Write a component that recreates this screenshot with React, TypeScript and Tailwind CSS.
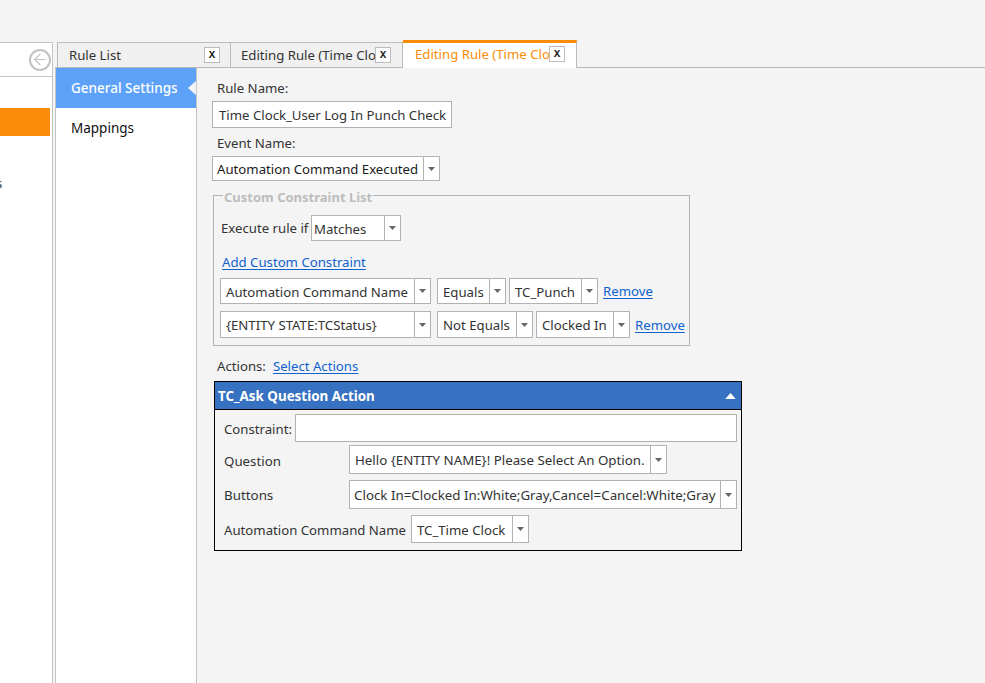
import { ArrowLeft } from 'lucide-react'

const fontClass = "font-['Noto_Sans','Open_Sans',sans-serif]"

function Caret({ up, light }: { up?: boolean; light?: boolean }) {
  return (
    <svg width={up ? 11 : 7} height={up ? 6 : 4} viewBox="0 0 7 4" className="shrink-0">
      <path d={up ? 'M3.5 0L7 4H0z' : 'M0 0h7L3.5 4z'} fill={light ? '#ffffff' : '#666666'} />
    </svg>
  )
}

function Select({ text, width, height, arrow = 16, dark, pad = 'pl-[4px]', className = '' }: { text: string; width: string; height: string; arrow?: number; dark?: boolean; pad?: string; className?: string }) {
  return (
    <div className={`flex shrink-0 bg-white border border-[#b2b2b2] ${width} ${height} ${className}`}>
      <div className={`flex-1 min-w-0 flex items-center pt-[1px] overflow-hidden whitespace-nowrap ${pad} ${dark ? 'text-[#1a1a1a]' : 'text-[#333333]'}`}>{text}</div>
      <div className="flex items-center justify-center border-l border-[#b2b2b2] shrink-0" style={{ width: arrow }}>
        <Caret />
      </div>
    </div>
  )
}

function CloseBox() {
  return (
    <span className="flex items-center justify-center w-[16px] h-[16px] shrink-0 bg-white border border-[#bcbcbc] text-[11px] leading-none font-bold text-[#222222] font-['Liberation_Mono',monospace]">
      X
    </span>
  )
}

function Link({ children, className = '' }: { children: string; className?: string }) {
  return <a className={`text-[#0f62d0] underline underline-offset-2 whitespace-nowrap ${className}`}>{children}</a>
}

export default function App() {
  return (
    <div className={`w-[985px] h-[683px] flex overflow-hidden bg-[#f4f4f4] text-[13.2px] leading-[18px] text-[#333333] ${fontClass}`}>
      {/* Left panel, cut off by the window */}
      <aside className="w-[53px] mt-[42px] shrink-0 bg-white border-t border-r border-[#c4c4c4] overflow-hidden">
        <div className="h-[34px] border-b border-[#c4c4c4] flex items-center justify-end pr-[1px]">
          <span className="flex items-center justify-center w-[22px] h-[22px] rounded-full border-2 border-[#c2c2c2]">
            <ArrowLeft className="w-[19px] h-[19px] text-[#c2c2c2]" strokeWidth={1.5} />
          </span>
        </div>
        <div className="mt-[31px] w-[50px] h-[28px] bg-[#fb8c0a]" />
        <div className="mt-[38px] -ml-[4px] text-[#333333]">s</div>
      </aside>

      <div className="flex-1 min-w-0 ml-[2px] flex flex-col">
        {/* Tab strip */}
        <div className="h-[28px] mt-[40px] flex items-end pl-[2px] border-b border-[#b8b8b8] shrink-0">
          <div className="w-[173px] h-[25px] flex items-center justify-between pl-[11px] pr-[10px] bg-[#f0f0f0] border-t border-l border-[#bcbcbc]">
            <span>Rule List</span>
            <CloseBox />
          </div>
          <div className="w-[173px] h-[25px] flex items-center pl-[10px] pr-[11px] bg-[#f0f0f0] border-t border-x border-[#bcbcbc]">
            <span className="flex-1 min-w-0 overflow-hidden whitespace-nowrap">Editing Rule (Time Clock</span>
            <CloseBox />
          </div>
          <div className="w-[174px] h-[28px] -mb-[1px] flex items-center pl-[12px] pr-[11px] pb-[3px] bg-white border-t-[3px] border-t-[#fb8c0a] border-r border-[#bcbcbc] text-[#fb8c0a]">
            <span className="flex-1 min-w-0 overflow-hidden whitespace-nowrap">Editing Rule (Time Clock</span>
            <CloseBox />
          </div>
        </div>

        <div className="flex-1 min-h-0 flex">
          {/* Settings nav */}
          <nav className="w-[142px] shrink-0 bg-white border-x border-[#c4c4c4] text-[13.5px]">
            <div className="relative h-[40px] flex items-center pl-[15px] bg-[#5da2f8] text-white font-medium">
              General Settings
              <span className="absolute right-0 top-[13px] w-0 h-0 border-y-[7px] border-y-transparent border-r-[8px] border-r-[#f4f4f4]" />
            </div>
            <div className="h-[40px] flex items-center pl-[15px] text-[#111111]">Mappings</div>
          </nav>

          {/* Rule form */}
          <main className="flex-1 min-w-0 pl-[15px]">
            <div className="pl-[5px] mt-[11px] h-[18px]">Rule Name:</div>
            <div className="mt-[4px] w-[240px] h-[27px] bg-white border border-[#b2b2b2] pl-[6px] pt-[1px] flex items-center whitespace-nowrap">
              Time Clock_User Log In Punch Check
            </div>
            <div className="pl-[5px] mt-[6px] h-[18px]">Event Name:</div>
            <Select text="Automation Command Executed" width="w-[228px]" height="h-[25px]" dark className="mt-[4px]" />

            <fieldset className="mt-[6px] ml-[1px] w-[477px] h-[159px] border border-[#b2b2b2] pl-[7px] pr-[3px]">
              <legend className="relative top-[2px] ml-[2px] px-[1px] text-[13px] text-[#bdbdbd] font-bold leading-[16px]">Custom Constraint List</legend>
              <div className="flex items-center mt-[12px]">
                <span className="w-[90px] shrink-0 whitespace-nowrap">Execute rule if</span>
                <Select text="Matches" width="w-[90px]" height="h-[26px]" pad="pl-[2px]" />
              </div>
              <Link className="block mt-[12px] ml-[1px] w-fit">Add Custom Constraint</Link>
              <div className="flex items-center mt-[7px] -ml-[1px]">
                <Select text="Automation Command Name" width="w-[211px]" height="h-[26px]" pad="pl-[5px]" />
                <Select text="Equals" width="w-[69px]" height="h-[26px]" pad="pl-[5px]" className="ml-[6px]" />
                <Select text="TC_Punch" width="w-[89px]" height="h-[26px]" pad="pl-[5px]" className="ml-[3px]" />
                <Link className="ml-[5px]">Remove</Link>
              </div>
              <div className="flex items-center mt-[7px] -ml-[1px]">
                <Select text="{ENTITY STATE:TCStatus}" width="w-[211px]" height="h-[27px]" pad="pl-[5px]" />
                <Select text="Not Equals" width="w-[96px]" height="h-[27px]" pad="pl-[5px]" className="ml-[6px]" />
                <Select text="Clocked In" width="w-[94px]" height="h-[27px]" pad="pl-[5px]" className="ml-[3px]" />
                <Link className="ml-[5px]">Remove</Link>
              </div>
            </fieldset>

            <div className="flex items-center mt-[11px] pl-[5px] h-[18px]">
              <span>Actions:</span>
              <Link className="ml-[7px]">Select Actions</Link>
            </div>

            {/* Action card */}
            <section className="mt-[6px] ml-[2px] w-[528px] h-[170px] border border-black">
              <div className="h-[28px] flex items-center justify-between pl-[3px] pr-[5px] bg-[#3771c1] border-b border-black text-white font-bold text-[13.4px]">
                <span>TC_Ask Question Action</span>
                <Caret up light />
              </div>
              <div className="pl-[9px] pr-[4px]">
                <div className="flex items-center mt-[4px]">
                  <span className="w-[71px] shrink-0 pt-[2px]">Constraint:</span>
                  <div className="flex-1 h-[28px] bg-white border border-[#b2b2b2]" />
                </div>
                <div className="flex items-center mt-[3px] text-[13.3px]">
                  <span className="w-[125px] shrink-0 pt-[3px]">Question</span>
                  <Select text="Hello {ENTITY NAME}! Please Select An Option." width="w-[318px]" height="h-[29px]" pad="pl-[5px]" />
                </div>
                <div className="flex items-center mt-[6px] text-[13.35px]">
                  <span className="w-[125px] shrink-0 pt-[1px]">Buttons</span>
                  <Select text="Clock In=Clocked In:White;Gray,Cancel=Cancel:White;Gray" width="w-[388px]" height="h-[29px]" pad="pl-[4px]" />
                </div>
                <div className="flex items-center mt-[6px]">
                  <span className="w-[187px] shrink-0 whitespace-nowrap pt-[2px]">Automation Command Name</span>
                  <Select text="TC_Time Clock" width="w-[118px]" height="h-[28px]" pad="pl-[5px]" />
                </div>
              </div>
            </section>
          </main>
        </div>
      </div>
    </div>
  )
}
